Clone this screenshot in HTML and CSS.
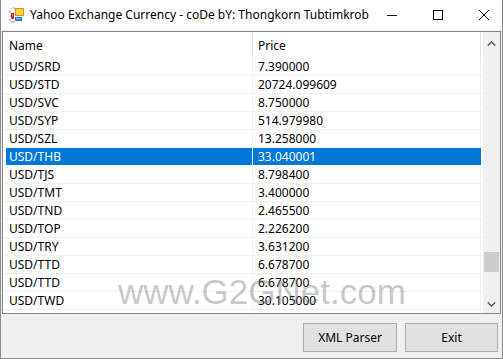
FILE: index.html
```html
<!DOCTYPE html>
<html lang="en">
<head>
    <meta charset="UTF-8">
    <title>Yahoo Exchange Currency</title>
    <link rel="stylesheet" href="styles.css">
</head>
<body>
    <div class="window">
        <div class="titlebar">
            <svg class="app-icon" width="16" height="16" viewBox="0 0 16 16">
                <g fill="#c8c8c8">
                    <rect x="0" y="4" width="2" height="2"/><rect x="0" y="8" width="2" height="2"/><rect x="0" y="12" width="2" height="2"/>
                    <rect x="4" y="0" width="2" height="2"/><rect x="4" y="14" width="2" height="2"/>
                    <rect x="2" y="14" width="2" height="2"/>
                </g>
                <rect x="2" y="6" width="3" height="6" fill="#d42a20"/>
                <rect x="3" y="7" width="1" height="2" fill="#f07060"/>
                <rect x="6.5" y="1.5" width="8" height="7" fill="#ffd23a" stroke="#e0900c"/>
                <rect x="6" y="10" width="7" height="4" fill="#2f74d0"/>
                <rect x="7" y="11" width="5" height="1" fill="#8cc0f0"/>
            </svg>
            <span class="title">Yahoo Exchange Currency - coDe bY: Thongkorn Tubtimkrob</span>
            <div class="caption-buttons">
                <span class="cap-btn">
                    <svg width="10" height="10" viewBox="0 0 10 10"><path d="M0 5.5h10" stroke="#000" stroke-width="1"/></svg>
                </span>
                <span class="cap-btn">
                    <svg width="10" height="10" viewBox="0 0 10 10"><rect x="0.5" y="0.5" width="9" height="9" fill="none" stroke="#000" stroke-width="1"/></svg>
                </span>
                <span class="cap-btn">
                    <svg width="10" height="10" viewBox="0 0 10 10"><path d="M0 0L10 10M10 0L0 10" stroke="#000" stroke-width="1"/></svg>
                </span>
            </div>
        </div>

        <div class="client">
            <div class="listview">
                <div class="list-body">
                    <div class="list-header">
                        <div class="cell name">Name</div>
                        <div class="cell price">Price</div>
                    </div>
                    <div class="row"><div class="cell name">USD/SRD</div><div class="cell price">7.390000</div></div>
                    <div class="row"><div class="cell name">USD/STD</div><div class="cell price">20724.099609</div></div>
                    <div class="row"><div class="cell name">USD/SVC</div><div class="cell price">8.750000</div></div>
                    <div class="row"><div class="cell name">USD/SYP</div><div class="cell price">514.979980</div></div>
                    <div class="row"><div class="cell name">USD/SZL</div><div class="cell price">13.258000</div></div>
                    <div class="row selected"><div class="cell name">USD/THB</div><div class="cell price">33.040001</div></div>
                    <div class="row"><div class="cell name">USD/TJS</div><div class="cell price">8.798400</div></div>
                    <div class="row"><div class="cell name">USD/TMT</div><div class="cell price">3.400000</div></div>
                    <div class="row"><div class="cell name">USD/TND</div><div class="cell price">2.465500</div></div>
                    <div class="row"><div class="cell name">USD/TOP</div><div class="cell price">2.226200</div></div>
                    <div class="row"><div class="cell name">USD/TRY</div><div class="cell price">3.631200</div></div>
                    <div class="row"><div class="cell name">USD/TTD</div><div class="cell price">6.678700</div></div>
                    <div class="row"><div class="cell name">USD/TTD</div><div class="cell price">6.678700</div></div>
                    <div class="row"><div class="cell name">USD/TWD</div><div class="cell price">30.105000</div></div>
                    <div class="row"><div class="cell name">USD/TZS</div><div class="cell price">2232.000000</div></div>
                </div>
                <div class="vscroll">
                    <div class="arrow arrow-up">
                        <svg width="9" height="5" viewBox="0 0 9 5"><path d="M0.8 4.5L4.5 1L8.2 4.5" fill="none" stroke="#606060" stroke-width="1.6"/></svg>
                    </div>
                    <div class="track"><div class="thumb"></div></div>
                    <div class="arrow">
                        <svg width="9" height="5" viewBox="0 0 9 5"><path d="M0.8 0.5L4.5 4L8.2 0.5" fill="none" stroke="#606060" stroke-width="1.6"/></svg>
                    </div>
                </div>
            </div>

            <div class="button-bar">
                <button class="btn btn-xml">XML Parser</button>
                <button class="btn btn-exit">Exit</button>
            </div>
        </div>

        <div class="watermark">www.G2GNet.com</div>
    </div>
</body>
</html>
```

FILE: styles.css
```css
body {
    margin: 0;
    background: #fff;
    font-family: 'Noto Sans', 'Open Sans', sans-serif;
    font-size: 12px;
    color: #000;
}
.window {
    position: relative;
    width: 503px;
    height: 359px;
    box-sizing: border-box;
    border: 1px solid #8c8c8c;
    border-top: none;
    display: flex;
    flex-direction: column;
    overflow: hidden;
}
.titlebar {
    height: 30px;
    flex: none;
    display: flex;
    align-items: center;
    background: #fff;
    padding-left: 8px;
}
.app-icon {
    flex: none;
    margin-right: 5px;
    margin-top: -1px;
}
.title {
    flex: 1;
    white-space: nowrap;
    line-height: 30px;
}
.caption-buttons {
    display: flex;
    height: 30px;
}
.cap-btn {
    width: 46px;
    height: 30px;
    display: flex;
    align-items: center;
    justify-content: center;
}
.client {
    flex: 1;
    display: flex;
    flex-direction: column;
    background: #f0f0f0;
    padding: 1px 1px 0;
}
.listview {
    height: 283px;
    flex: none;
    box-sizing: border-box;
    border: 1px solid #828790;
    background: #fff;
    display: flex;
}
.list-body {
    flex: 1;
    overflow: hidden;
}
.list-header {
    display: flex;
    height: 26px;
    line-height: 27px;
}
.list-header .cell {
    border-right: 1px solid #e5e5e5;
}
.row {
    display: flex;
    height: 18px;
    line-height: 17px;
    box-sizing: border-box;
    border-bottom: 1px solid #f0f0f0;
}
.row .cell {
    border-right: 1px solid #f0f0f0;
}
.cell {
    box-sizing: border-box;
    white-space: nowrap;
    overflow: hidden;
}
.cell.name {
    width: 250px;
    padding-left: 6px;
}
.cell.price {
    width: 228px;
    padding-left: 5px;
}
.row.selected {
    color: #fff;
    border-bottom-color: #fff;
}
.row.selected .cell {
    background: #0078d7;
}
.row.selected .cell.name {
    border-left: 3px solid #fff;
    padding-left: 3px;
    border-right-color: #fff;
}
.row.selected .cell.price {
    border-right-color: #0078d7;
}
.vscroll {
    width: 17px;
    flex: none;
    background: #f0f0f0;
    display: flex;
    flex-direction: column;
}
.arrow {
    height: 17px;
    display: flex;
    align-items: center;
    justify-content: center;
}
.arrow-up {
    height: 23px;
}
.track {
    flex: 1;
}
.thumb {
    margin: 197px 1px 0;
    height: 20px;
    background: #cdcdcd;
}
.button-bar {
    flex: 1;
    display: flex;
    justify-content: flex-end;
    align-items: flex-start;
    gap: 8px;
    padding: 9px 3px 0 0;
}
.btn {
    height: 29px;
    margin: 0;
    padding: 0;
    background: #e1e1e1;
    border: 1px solid #adadad;
    font-family: 'Noto Sans', 'Open Sans', sans-serif;
    font-size: 12px;
    color: #000;
}
.btn-xml {
    width: 94px;
}
.btn-exit {
    width: 93px;
}
/* watermark sits over the list and the button bar */
.watermark {
    position: absolute;
    left: 117px;
    top: 274px;
    font-family: 'Liberation Sans', Arial, sans-serif;
    font-size: 35px;
    line-height: 35px;
    color: rgba(110, 110, 110, 0.38);
    pointer-events: none;
    white-space: nowrap;
}
```
